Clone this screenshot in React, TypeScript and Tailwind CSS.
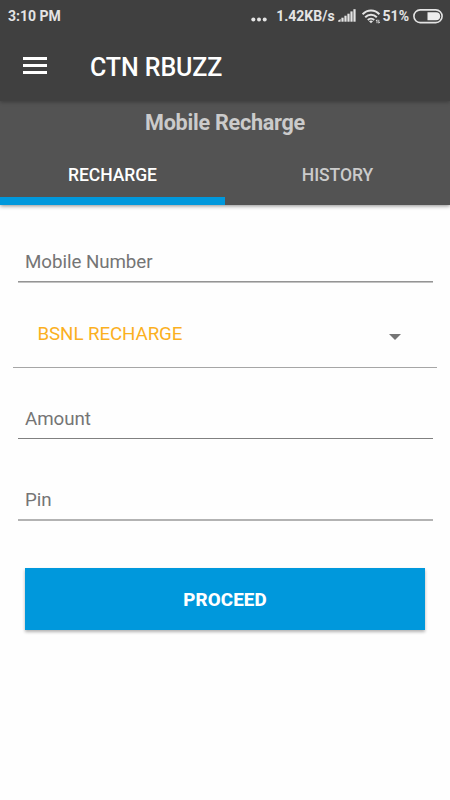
import { useState } from "react";
import clsx from "clsx";

interface FieldProps {
  label: string;
  className?: string;
  lineClassName: string;
}

const tabs = ["RECHARGE", "HISTORY"];

function SignalIcon() {
  return (
    <svg className="mb-px" width="18" height="13" viewBox="0 0 18 13" fill="#e4e4e4">
      <path d="M0.2 12.7V11.6L2.6 10v2.7z" />
      <rect x="3.4" y="8.7" width="2.2" height="4" />
      <rect x="6.4" y="6.7" width="2.2" height="6" />
      <rect x="9.4" y="4.7" width="2.2" height="8" />
      <rect x="12.4" y="2.4" width="2.2" height="10.3" />
      <rect x="15.4" y="0.2" width="2.2" height="12.5" />
    </svg>
  );
}

function WifiIcon() {
  return (
    <svg width="20" height="15" viewBox="0 0 20 15" fill="none" stroke="#e4e4e4" strokeWidth="2">
      <path d="M0.6 5.3C5.4 0.3 12.6 0.3 17.4 5.3" />
      <path d="M3.2 8.2c3.3-3.4 8.3-3.4 11.6 0" />
      <path d="M5.8 10.9c1.8-1.7 4.6-1.7 6.4 0" />
      <path d="M9 14.2l-2-2q2-1.2 4 0z" fill="#e4e4e4" stroke="none" />
      <path d="M15 10.8v3.4M16.8 10.8v3.4M14 12l1-1.2M17.8 13l-1 1.2" strokeWidth="0.9" />
    </svg>
  );
}

function BatteryIcon() {
  return (
    <svg width="30" height="15" viewBox="0 0 30 15">
      <rect x="0.9" y="0.9" width="28.2" height="12.7" rx="6.3" fill="none" stroke="#e4e4e4" strokeWidth="1.6" />
      <path d="M14.5 3.2h8.6a4 4 0 0 1 0 8.1h-8.6z" fill="#ededed" />
    </svg>
  );
}

function StatusBar() {
  return (
    <div className="flex h-8 items-center pr-[7px] pl-2 text-[14px] font-bold text-[#e4e4e4]">
      <span>3:10 PM</span>
      <div className="ml-auto flex items-center">
        <svg className="mt-[7px] mr-[9px]" width="16" height="5" viewBox="0 0 16 5" fill="#e4e4e4">
          <circle cx="2.3" cy="2.5" r="2" />
          <circle cx="8" cy="2.5" r="2" />
          <circle cx="13.7" cy="2.5" r="2" />
        </svg>
        <span className="mr-[3px]">1.42KB/s</span>
        <SignalIcon />
        <span className="ml-1.5">
          <WifiIcon />
        </span>
        <span className="mr-[4px] ml-px">51%</span>
        <BatteryIcon />
      </div>
    </div>
  );
}

function Field({ label, className, lineClassName }: FieldProps) {
  return (
    <div className={clsx("mr-[17px] ml-[17.5px]", className)}>
      <input
        aria-label={label}
        placeholder={label}
        className="block h-7 w-full px-[7.5px] pt-0.5 text-[18.75px] tracking-[-0.06px] text-[#757575] outline-none placeholder:text-[#757575]"
      />
      <div className={lineClassName} />
    </div>
  );
}

export default function App() {
  const [activeTab, setActiveTab] = useState(0);

  return (
    <div className="flex h-[800px] w-[450px] flex-col overflow-hidden bg-[#fefefe] font-[Roboto,sans-serif]">
      <header className="relative z-20 h-[101px] shrink-0 bg-[#404040] shadow-[0_1px_4px_rgba(0,0,0,0.3)]">
        <StatusBar />
        <div className="flex h-[69px] items-center pl-[23px]">
          <button aria-label="Menu" className="mb-[3px] flex w-6 flex-col gap-1">
            <span className="h-[3px] bg-white" />
            <span className="h-[3px] bg-white" />
            <span className="h-[3px] bg-white" />
          </button>
          <h1 className="mt-[3px] ml-[43px] text-[25px] font-medium tracking-[-0.1px] text-white">CTN RBUZZ</h1>
        </div>
      </header>

      <section className="relative z-10 flex h-[104px] shrink-0 flex-col bg-[#535353] shadow-[0_1px_4px_rgba(0,0,0,0.45)]">
        <h2 className="h-[43px] text-center text-[21.6px] leading-[43px] font-bold tracking-[-0.26px] text-[#cbcbcb]">
          Mobile Recharge
        </h2>
        <div className="flex flex-1">
          {tabs.map((tab, index) => (
            <button
              key={tab}
              onClick={() => setActiveTab(index)}
              className={clsx(
                "flex-1 border-b-8 pt-2.5 text-[17.5px] font-medium tracking-[-0.05px]",
                index === activeTab ? "border-[#0098dc] text-white" : "border-transparent text-[#cbcbcb]"
              )}
            >
              {tab}
            </button>
          ))}
        </div>
      </section>

      <main className="flex flex-col">
        <Field label="Mobile Number" className="mt-[42px]" lineClassName="mt-1.5 h-0.5 border-t border-[#949494] bg-[#c2c2c2]" />
        <button className="mt-[30px] mr-[13px] ml-[12.5px] flex h-[55px] items-center justify-between border-b border-[#a6a6a6] pr-9 pb-[11px] pl-[25px] text-[18.75px] tracking-[-0.1px] text-[#fbb01f]">
          <span>BSNL RECHARGE</span>
          <svg className="mt-1" width="12" height="6" viewBox="0 0 12 6">
            <path d="M0 0h12L6 6z" fill="#757575" />
          </svg>
        </button>
        <Field label="Amount" className="mt-9" lineClassName="mt-1.5 h-px bg-[#808080]" />
        <Field label="Pin" className="mt-[46px]" lineClassName="mt-1.5 h-0.5 bg-[#b3b3b3]" />
        <button className="mx-[25px] mt-[47px] h-[62px] bg-[#0098dc] pt-0.5 text-[18.75px] font-extrabold tracking-[0.1px] text-white shadow-[0_2px_3px_rgba(0,0,0,0.3)]">
          PROCEED
        </button>
      </main>
    </div>
  );
}
